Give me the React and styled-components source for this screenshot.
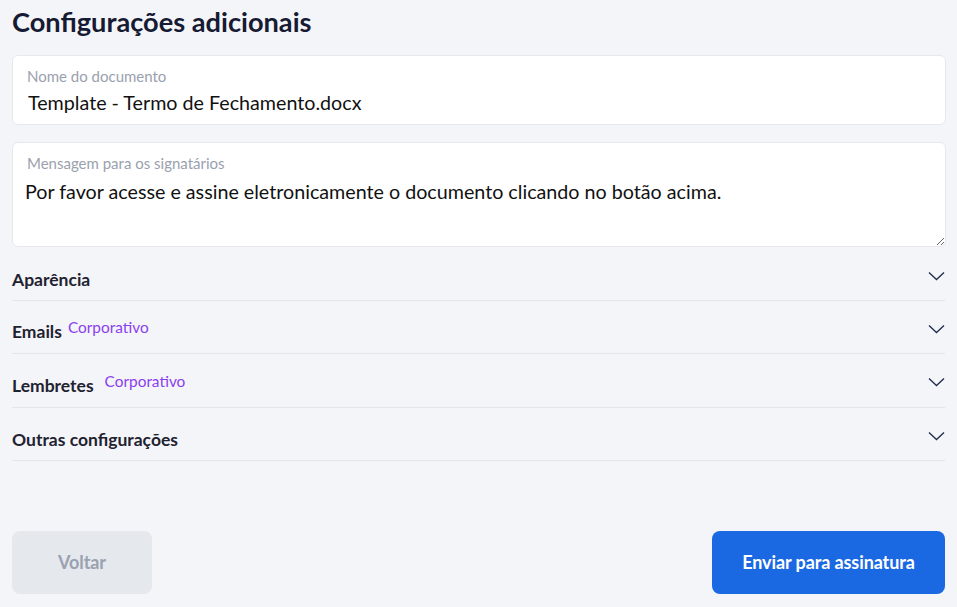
import React from "react";
import styled, { createGlobalStyle } from "styled-components";

const Global = createGlobalStyle`
  html, body { margin: 0; padding: 0; background: #f4f5f9; }
  body { font-family: Lato, "Open Sans", sans-serif; }
  * { box-sizing: border-box; }
`;

const Page = styled.div`
  width: 957px;
  height: 607px;
  padding: 4px 12px 0 12px;
  display: flex;
  flex-direction: column;
  background: #f4f5f9;
`;

const Title = styled.h1`
  margin: 0 0 15px 0;
  font-size: 27.2px;
  line-height: 36px;
  font-weight: 700;
  color: #161a33;
`;

const Field = styled.div`
  position: relative;
  width: 934px;
  height: ${(p) => p.$h}px;
  margin-bottom: ${(p) => p.$mb}px;
  background: #fff;
  border: 1px solid #e6e8ee;
  border-radius: 6px;
`;

const Label = styled.span`
  position: absolute;
  left: 14px;
  top: 11px;
  font-size: 15px;
  line-height: 18px;
  color: #9aa1ae;
  pointer-events: none;
`;

const Input = styled.input`
  display: block;
  width: 100%;
  height: 100%;
  border: none;
  outline: none;
  background: transparent;
  padding: 25px 15px 0 15px;
  font-family: Lato, sans-serif;
  font-size: 19.7px;
  color: #111;
`;

const TextArea = styled.textarea`
  display: block;
  width: 100%;
  height: 100%;
  border: none;
  outline: none;
  background: transparent;
  resize: vertical;
  padding: 37px 12px 0 12px;
  font-family: Lato, sans-serif;
  font-size: 19.7px;
  line-height: 24px;
  color: #111;
`;

const Accordion = styled.div`
  display: flex;
  flex-direction: column;
  margin-top: 7px;
`;

const Row = styled.div`
  display: flex;
  align-items: center;
  justify-content: space-between;
  height: ${(p) => p.$h}px;
  border-bottom: 1px solid #e3e5ea;
`;

const RowTitle = styled.div`
  display: flex;
  align-items: flex-start;
  gap: ${(p) => p.$gap || 6}px;
  font-size: 17.5px;
  font-weight: 700;
  color: #1f2230;
  padding-top: ${(p) => p.$pt || 0}px;
`;

const Badge = styled.span`
  font-size: 15.4px;
  font-weight: 400;
  color: #8b3ff0;
  margin-top: -3px;
`;

const Chevron = styled.svg`
  width: 17px;
  height: 10px;
  margin-top: ${(p) => p.$mt || 0}px;
`;

const Footer = styled.div`
  margin-top: auto;
  margin-bottom: 13px;
  display: flex;
  justify-content: space-between;
`;

const Button = styled.button`
  height: 63px;
  width: ${(p) => p.$w}px;
  border: none;
  border-radius: 8px;
  font-family: Lato, sans-serif;
  font-size: 18px;
  font-weight: 700;
  letter-spacing: -0.1px;
  padding-bottom: 2px;
  background: ${(p) => (p.$primary ? "#1a68e2" : "#e5e8ed")};
  color: ${(p) => (p.$primary ? "#fff" : "#9aa2b1")};
  cursor: pointer;
`;

const Down = ({ mt }) => (
  <Chevron $mt={mt} viewBox="0 0 17 10">
    <path d="M1 1.5 L8.5 8.5 L16 1.5" fill="none" stroke="#1e2b4a" strokeWidth="1.3" />
  </Chevron>
);

export default function App() {
  return (
    <>
      <Global />
      <Page>
        <Title>Configurações adicionais</Title>
        <Field $h={70} $mb={17}>
          <Label>Nome do documento</Label>
          <Input defaultValue="Template - Termo de Fechamento.docx" />
        </Field>
        <Field $h={105} $mb={0}>
          <Label>Mensagem para os signatários</Label>
          <TextArea defaultValue="Por favor acesse e assine eletronicamente o documento clicando no botão acima." />
        </Field>
        <Accordion>
          <Row $h={47}>
            <RowTitle $pt={4}>Aparência</RowTitle>
            <Down mt={-2} />
          </Row>
          <Row $h={53}>
            <RowTitle $pt={9}>
              Emails<Badge>Corporativo</Badge>
            </RowTitle>
            <Down mt={4} />
          </Row>
          <Row $h={54}>
            <RowTitle $pt={9} $gap={11}>
              Lembretes<Badge>Corporativo</Badge>
            </RowTitle>
            <Down mt={3} />
          </Row>
          <Row $h={53}>
            <RowTitle $pt={11}>Outras configurações</RowTitle>
            <Down mt={4} />
          </Row>
        </Accordion>
        <Footer>
          <Button $w={140}>Voltar</Button>
          <Button $primary $w={233}>Enviar para assinatura</Button>
        </Footer>
      </Page>
    </>
  );
}
